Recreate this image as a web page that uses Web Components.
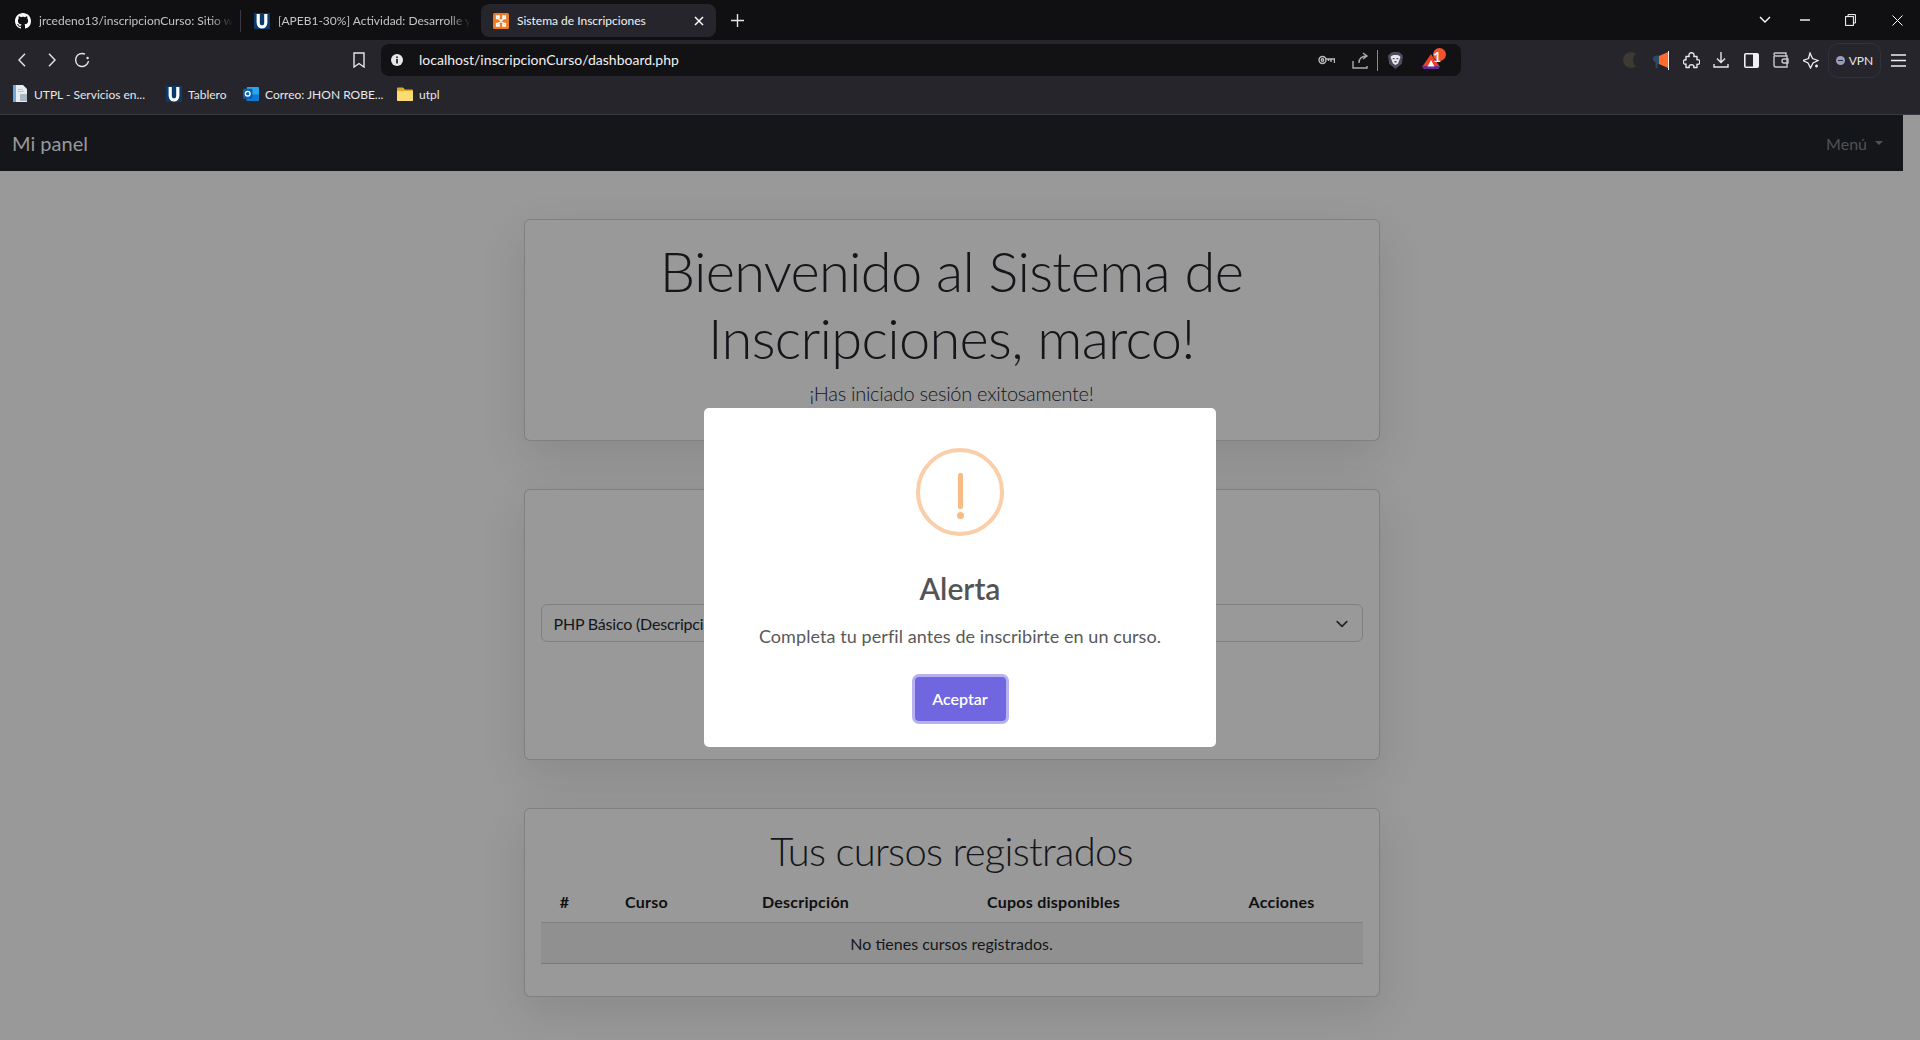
<!DOCTYPE html>
<html lang="es"><head><meta charset="utf-8"><title>Sistema de Inscripciones</title>
<style>
html,body{margin:0;height:100%;overflow:hidden;background:#999}
body{font-family:"Lato","Open Sans",sans-serif;display:flex;flex-direction:column;width:1920px;height:1040px;position:relative}
browser-chrome{flex:none}
app-page{flex:1;min-height:0}
</style></head><body>
<browser-chrome></browser-chrome>
<app-page>
  <top-nav brand="Mi panel" menu="Menú"></top-nav>
  <info-card pad="hero">
    <h-hero>Bienvenido al Sistema de<br>Inscripciones, marco!</h-hero>
    <p-lead>¡Has iniciado sesión exitosamente!</p-lead>
  </info-card>
  <info-card pad="form"><select-box>PHP Básico (Descripción</select-box></info-card>
  <info-card pad="table"><course-table></course-table></info-card>
</app-page>
<alert-modal title-text="Alerta" text="Completa tu perfil antes de inscribirte en un curso." button="Aceptar"></alert-modal>
<script>
const FONT='"Lato","Open Sans",sans-serif';
function def(name,html){
  customElements.define(name,class extends HTMLElement{
    constructor(){super();this.attachShadow({mode:'open'}).innerHTML=typeof html==='function'?html(this):html;}
  });
}
const I={
 gh:'<svg width="16" height="16" viewBox="0 0 16 16"><path fill="#fff" d="M8 0C3.58 0 0 3.58 0 8c0 3.54 2.29 6.53 5.47 7.59.4.07.55-.17.55-.38 0-.19-.01-.82-.01-1.49-2.01.37-2.53-.49-2.69-.94-.09-.23-.48-.94-.82-1.13-.28-.15-.68-.52-.01-.53.63-.01 1.08.58 1.23.82.72 1.21 1.87.87 2.33.66.07-.52.28-.87.51-1.07-1.78-.2-3.64-.89-3.64-3.95 0-.87.31-1.59.82-2.15-.08-.2-.36-1.02.08-2.12 0 0 .67-.21 2.2.82.64-.18 1.32-.27 2-.27s1.36.09 2 .27c1.53-1.04 2.2-.82 2.2-.82.44 1.1.16 1.92.08 2.12.51.56.82 1.27.82 2.15 0 3.07-1.87 3.75-3.65 3.95.29.25.54.73.54 1.48 0 1.07-.01 1.93-.01 2.2 0 .21.15.46.55.38A8.01 8.01 0 0 0 16 8c0-4.42-3.58-8-8-8z"/></svg>',
 u:'<svg width="16" height="16" viewBox="0 0 16 16"><rect width="16" height="16" fill="#0b3a6b"/><path fill="none" stroke="#fff" stroke-width="3.2" d="M4.2 1v8.4c0 6 7.6 6 7.6 0V1"/></svg>',
 xampp:'<svg width="16" height="16" viewBox="0 0 16 16"><rect width="16" height="16" rx="1.500" fill="#ef7a22"/><path fill="none" stroke="#fff" stroke-width="1.700" d="M5.500 5.500 10.500 10.500M10.500 5.500 5.500 10.500M5.500 5.500H3.700V3.200H6V5M10.500 5.500H12.300V3.200H10V5M5.500 10.500H3.700V12.800H6V11M10.500 10.500H12.300V12.800H10V11"/></svg>',
 page:'<svg width="16" height="18" viewBox="0 0 16 18"><path fill="#e8edf2" d="M1 0h10l4 4v13H1z"/><path fill="#6fa8d8" d="M1 0h3v17H1z"/><path fill="#b9c4cf" d="M6 4h5v1H6zM6 6h6v1H6z"/><rect x="8" y="9" width="7" height="7" fill="#aab6c2"/></svg>',
 outlook:'<svg width="16" height="16" viewBox="0 0 17 17"><rect x="4" y="1" width="13" height="15" rx="1" fill="#28a8ea"/><rect x="4" y="9" width="13" height="7" fill="#0f78d4"/><rect y="3" width="10" height="10.500" rx="1" fill="#0a5eb0"/><circle cx="5" cy="8.200" r="2.500" fill="none" stroke="#fff" stroke-width="1.500"/></svg>',
 folder:'<svg width="16" height="16" viewBox="0 0 16 16"><path fill="#e0a92a" d="M0 2.500A1 1 0 0 1 1 1.500h5l2 2h7a1 1 0 0 1 1 1V14a1 1 0 0 1-1 1H1a1 1 0 0 1-1-1z"/><path fill="#fbdc72" d="M0 5h16v9a1 1 0 0 1-1 1H1a1 1 0 0 1-1-1z"/></svg>'
};
const ic=(w,h,body,extra='')=>`<svg width="${w}" height="${h}" viewBox="0 0 ${w} ${h}" fill="none" stroke="#e6e6ea" stroke-width="1.400" ${extra}>${body}</svg>`;
def('browser-chrome',`<style>
:host{display:block;font:12px ${FONT};color:#e8e8ea}
svg{flex:none;display:block}
.tabs{height:40px;background:#101013;display:flex;align-items:center;padding:1px 0 0 15px;box-sizing:border-box}
.tab{display:flex;align-items:center;gap:8px;white-space:nowrap;color:#c4c4c8;flex:none}
.t1{width:213px}.t2{width:214px;margin-left:13px}
.sep{width:1px;height:22px;background:#3a3a40;margin-left:12px;flex:none}
.fade{white-space:nowrap;-webkit-mask-image:linear-gradient(90deg,#000 88%,transparent);mask-image:linear-gradient(90deg,#000 88%,transparent)}
.active{margin-left:13px;width:235px;height:33px;box-sizing:border-box;background:#25252b;border-radius:8px;display:flex;align-items:center;padding:0 12px;gap:8px;color:#f2f2f4;flex:none}
.active span{flex:1}
.plus{margin-left:15px;width:13px;height:13px;display:flex;flex:none}
.win{margin-left:auto;display:flex;align-items:center;margin-top:-1px}
.win>*{display:flex;justify-content:center}
.tool{height:40px;background:#25252b;display:flex;align-items:center}
.nav{display:flex;align-items:center;padding-left:18px;width:381px;box-sizing:border-box}
.nav .bm{margin-left:auto;margin-right:16px;display:flex}
.url{width:1080px;height:32px;background:#121215;border-radius:8px;display:flex;align-items:center;padding:0 0 0 10px;box-sizing:border-box;font-size:14px;gap:16px;color:#f0f0f2}
.url>span{padding-bottom:2px}
.uright{margin-left:auto;display:flex;align-items:center;padding-right:15px}
.uright>span{display:flex}
.ext{margin-left:auto;display:flex;align-items:center;padding-right:7px}
.c{width:30px;display:flex;justify-content:center}
.vpn{width:53px;height:35px;margin:0 2px;border:1px solid #313138;border-radius:10px;box-sizing:border-box;display:flex;align-items:center;justify-content:center;gap:4px;font-size:12px}
.vpn i{width:9px;height:9px;border-radius:50%;background:#9a9cc0;display:block;position:relative}
.vpn i::after{content:"";position:absolute;left:2px;right:2px;top:4px;height:1px;background:#25252b}
.book{height:35px;background:#25252b;border-bottom:1px solid #3a3a40;display:flex;align-items:center;padding:0 0 6px 12px;box-sizing:border-box;font-size:12px;color:#e8e8ea}
.b{display:flex;align-items:center;gap:6px;white-space:nowrap;flex:none}
</style>
<div class="tabs">
  <div class="tab t1">${I.gh}<span class="fade">jrcedeno13/inscripcionCurso: Sitio w</span></div>
  <div class="sep"></div>
  <div class="tab t2">${I.u}<span class="fade">[APEB1-30%] Actividad: Desarrolle y</span></div>
  <div class="active">${I.xampp}<span>Sistema de Inscripciones</span>${ic(10,10,'<path d="M1 1l8 8M9 1l-8 8" stroke="#fff" stroke-width="1.500"/>')}</div>
  <div class="plus">${ic(13,13,'<path d="M6.500 0v13M0 6.500h13"/>')}</div>
  <div class="win">
    <div style="width:40px">${ic(12,8,'<path d="M1 1l5 5 5-5" stroke="#fff"/>')}</div>
    <div style="width:40px">${ic(10,2,'<path d="M0 1h10" stroke="#fff"/>')}</div>
    <div style="width:50px">${ic(11,12,'<rect x=".6" y="2.600" width="7.800" height="8.800" stroke="#fff" stroke-width="1"/><path d="M3 2.500V.6h7.400v8.400H8.500" stroke="#fff" stroke-width="1"/>')}</div>
    <div style="width:45px">${ic(11,11,'<path d="M.5.5l10 10M10.500.5l-10 10" stroke="#fff" stroke-width="1"/>')}</div>
  </div>
</div>
<div class="tool">
  <div class="nav">
    ${ic(8,14,'<path d="M7 .7 1 7l6 6.300"/>')}
    ${ic(8,14,'<path d="M1 .7 7 7l-6 6.300"/>','style="margin-left:22px"')}
    ${ic(16,16,'<path d="M11 2.200A6.500 6.500 0 1 0 14.500 9"/><circle cx="13.600" cy="6" r="1.200" fill="#e6e6ea" stroke="none"/>','style="margin-left:18px"')}
    <span class="bm">${ic(12,16,'<path d="M1 1h10v14l-5-3.500L1 15z"/>')}</span>
  </div>
  <div class="url">
    <svg width="12" height="12" viewBox="0 0 12 12"><circle cx="6" cy="6" r="6" fill="#e8e8ea"/><rect x="5.200" y="5" width="1.600" height="4.500" fill="#121215"/><rect x="5.200" y="2.500" width="1.600" height="1.600" fill="#121215"/></svg>
    <span>localhost/inscripcionCurso/dashboard.php</span>
    <div class="uright">
      ${ic(17,10,'<circle cx="4.500" cy="5" r="3.500" stroke="#bbb"/><circle cx="4.500" cy="5" r="1.200" stroke="#bbb"/><path d="M8 4h8.500v4M13 4v3M10.500 4v2" stroke="#bbb"/>')}
      <span style="margin-left:17px">${ic(17,17,'<path d="M1 9v7h14v-2M7 11c0-5 3-7 8-7M11 1l4 3-4 3" stroke="#aaa"/>')}</span>
      <span style="margin-left:8px;width:1px;height:21px;background:#8a8a90"></span>
      <span style="margin-left:10px"><svg width="15" height="17" viewBox="0 0 15 17"><path fill="#4d4d5e" d="M3 .8 5.200 0h4.600L12 .8l3 3-1.200 8L7.500 17 1.200 11.800 0 3.800z"/><path fill="#e8e8ee" d="M4 3.500 6 3h3l2 .5 1.500 1.500-1.300 3.500-1.200 3L7.500 13l-2.500-1.500-1.200-3L2.500 5z"/><path fill="#4d4d5e" d="M4.800 6h1.700v1.300H4.800zM8.500 6h1.700v1.300H8.500zM6.500 9h2v1.500h-2z"/></svg></span>
      <span style="margin-left:19px;position:relative;display:block;width:24px;height:22px"><svg width="18" height="15" viewBox="0 0 18 15" style="position:absolute;left:0;top:5px"><path fill="#ef3f23" d="M9 0 18 13H0z"/><path fill="#662d91" d="M0 12h18l-1.500 3h-15z"/><path fill="#fff" d="M9 6 12.500 12.500h-7z"/></svg><b style="position:absolute;left:11px;top:-1px;width:13px;height:13px;background:#f4512c;border-radius:50%;font:600 8px/13px ${FONT};text-align:center;color:#fff">1</b></span>
    </div>
  </div>
  <div class="ext">
    <div class="c"><svg width="16" height="18" viewBox="0 0 16 18"><path fill="#3f3a31" d="M13 2.700A8 8 0 1 0 13 15.300A8 8 0 0 1 13 2.700z"/></svg></div>
    <div class="c"><svg width="16" height="19" viewBox="0 0 16 19"><path fill="#ff6b2c" d="M6 5l9-4v16L6 13z"/><path fill="#2d4a66" d="M0 7c0-2 2-2.500 6-2.500V13H4.500v4h-2v-6C0 10 0 9 0 7z"/><rect x="15" y="0" width="1" height="19" fill="#eee"/></svg></div>
    <div class="c">${ic(17,17,'<path stroke-linejoin="round" d="M3 4.500h3.200c-.9-2.600.8-3.800 2.300-3.800s3.200 1.200 2.300 3.800H14v3.300c2.200-.8 2.800 1 2.800 2.200s-.6 3-2.800 2.200v3.300h-3.300c.8-2.200-1-2.800-2.200-2.800s-3 .6-2.200 2.800H3V12c-2.200.8-2.600-1-2.600-2s.4-2.800 2.600-2z"/>')}</div>
    <div class="c">${ic(16,16,'<path d="M8 0v10M4 6.500 8 10.500l4-4M1 12v3h14v-3"/>')}</div>
    <div class="c"><svg width="15" height="15" viewBox="0 0 15 15"><rect x=".8" y=".8" width="13.400" height="13.400" rx="1" fill="none" stroke="#f0f0f2" stroke-width="1.600"/><rect x="9" y="1" width="5" height="13" fill="#f0f0f2"/></svg></div>
    <div class="c">${ic(16,16,'<path d="M1 4V13a2 2 0 0 0 2 2h11V4H3a2 2 0 0 1-2-2 1 1 0 0 1 1-1h11v3" stroke="#c8c8cc"/><path d="M15 7h-4a2 2 0 0 0 0 4h4z" stroke="#c8c8cc"/>')}</div>
    <div class="c">${ic(16,17,'<path d="M7 1l2.500 5.500 5.500 2-5 2.500-2.500 5-2.500-5-5-2.500 5.500-2z" stroke="#eee" stroke-width="1.300"/><path d="M13.500 12.500v3M12 14h3" stroke="#eee"/>')}</div>
    <div class="vpn"><i></i>VPN</div>
    <div class="c">${ic(15,13,'<path d="M0 1h15M0 6.500h15M0 12h15" stroke="#f0f0f2" stroke-width="1.300"/>')}</div>
  </div>
</div>
<div class="book">
  <div class="b" style="width:154px">${I.page}<span>UTPL - Servicios en...</span></div>
  <div class="b" style="width:77px">${I.u}<span>Tablero</span></div>
  <div class="b" style="width:154px">${I.outlook}<span>Correo: JHON ROBE...</span></div>
  <div class="b">${I.folder}<span>utpl</span></div>
</div>`);
def('app-page',`<style>
:host{display:flex;flex-direction:column;align-items:stretch;height:100%;width:1903px;overflow:hidden;background:#999;font-family:${FONT};color:#141619}
::slotted(info-card){margin:48px auto 0;width:856px}
::slotted(top-nav){flex:none}
</style><slot></slot>`);
def('top-nav',h=>`<style>
:host{display:flex;height:56px;background:#141619;align-items:center;justify-content:space-between;padding:0 12px;box-sizing:border-box;font-family:${FONT}}
.b{font-size:20px;color:#99999a}
.m{font-size:16px;color:#505254;display:flex;align-items:center;gap:8px;padding-right:8px}
.m i{border-top:4.800px solid #505254;border-left:4.800px solid transparent;border-right:4.800px solid transparent;display:block}
</style><span class="b">${h.getAttribute('brand')}</span><span class="m">${h.getAttribute('menu')}<i></i></span>`);
def('info-card',h=>{
 const pad={hero:'16px',form:'114px 16px 117px',table:'16px 16px 32px'}[h.getAttribute('pad')];
 return `<style>:host{display:block;box-sizing:border-box;background:#999;border:1px solid rgba(0,0,0,.16);border-radius:6px;padding:${pad};box-shadow:0 16px 48px rgba(0,0,0,.105);text-align:center}</style><slot></slot>`});
def('h-hero',`<style>:host{display:block;padding-top:1px;font-size:56px;font-weight:300;line-height:67.200px;letter-spacing:-.7px;color:#141619}</style><slot></slot>`);
def('p-lead',`<style>:host{display:block;margin:7px 0 16px;font-size:20px;font-weight:300;line-height:30px;letter-spacing:-.28px;color:#141619}</style><slot></slot>`);
def('select-box',`<style>:host{display:flex;align-items:center;height:38px;box-sizing:border-box;border:1px solid rgba(0,0,0,.16);border-radius:6px;padding:0 12px;font-size:16px;letter-spacing:-.2px;color:#141619;text-align:left;position:relative}
svg{position:absolute;right:12px;top:11px}</style><slot></slot><svg width="16" height="16" viewBox="0 0 16 16"><path fill="none" stroke="#1f2226" stroke-width="2" stroke-linecap="round" stroke-linejoin="round" d="M2 5l6 6 6-6" transform="translate(1.600 1.600) scale(.8)"/></svg>`);
def('course-table',`<style>
:host{display:block;font-size:16px;color:#141619}
h2{margin:0 0 6px;padding-top:2px;font-size:40px;font-weight:300;line-height:48px;letter-spacing:-.72px}
table{width:100%;border-collapse:collapse;table-layout:fixed}
th{font-weight:700;height:41px;padding:0;border-bottom:1px solid rgba(0,0,0,.16);color:#0f1012;letter-spacing:.25px}
td{height:40px;padding:0;background:rgba(0,0,0,.06);border-bottom:1px solid rgba(0,0,0,.16)}
</style><h2>Tus cursos registrados</h2>
<table><colgroup><col style="width:48px"><col style="width:116px"><col style="width:202px"><col style="width:294px"><col></colgroup>
<thead><tr><th>#</th><th>Curso</th><th>Descripción</th><th>Cupos disponibles</th><th>Acciones</th></tr></thead>
<tbody><tr><td colspan="5">No tienes cursos registrados.</td></tr></tbody></table>`);
def('alert-modal',h=>`<style>
:host{position:absolute;left:704px;top:408px;width:512px;height:339px;background:#fff;border-radius:5px;box-sizing:border-box;display:flex;flex-direction:column;align-items:center;font-family:${FONT};color:#595959}
.ic{margin-top:40px;width:88px;height:88px;box-sizing:border-box;border:4px solid #facea8;border-radius:50%;display:flex;flex-direction:column;align-items:center}
.ic b{display:block;width:5px;height:36px;background:#f8bb86;margin-top:21px;border-radius:2px}
.ic i{display:block;width:7px;height:7px;background:#f8bb86;border-radius:50%;margin-top:3px}
h2{margin:34px 0 0;font-size:30px;font-weight:600;line-height:36px;color:#545454}
p{margin:17px 0 0;font-size:18px;line-height:27px;font-weight:400;letter-spacing:.08px}
button{all:unset;margin-top:27px;box-sizing:border-box;width:91px;height:44px;text-align:center;background:#7066e0;color:#fff;font:600 16px/44px ${FONT};border-radius:4px;box-shadow:0 0 0 3px rgba(112,102,224,.5)}
</style><div class="ic"><b></b><i></i></div><h2>${h.getAttribute('title-text')}</h2><p>${h.getAttribute('text')}</p><button>${h.getAttribute('button')}</button>`);
</script>
</body></html>
